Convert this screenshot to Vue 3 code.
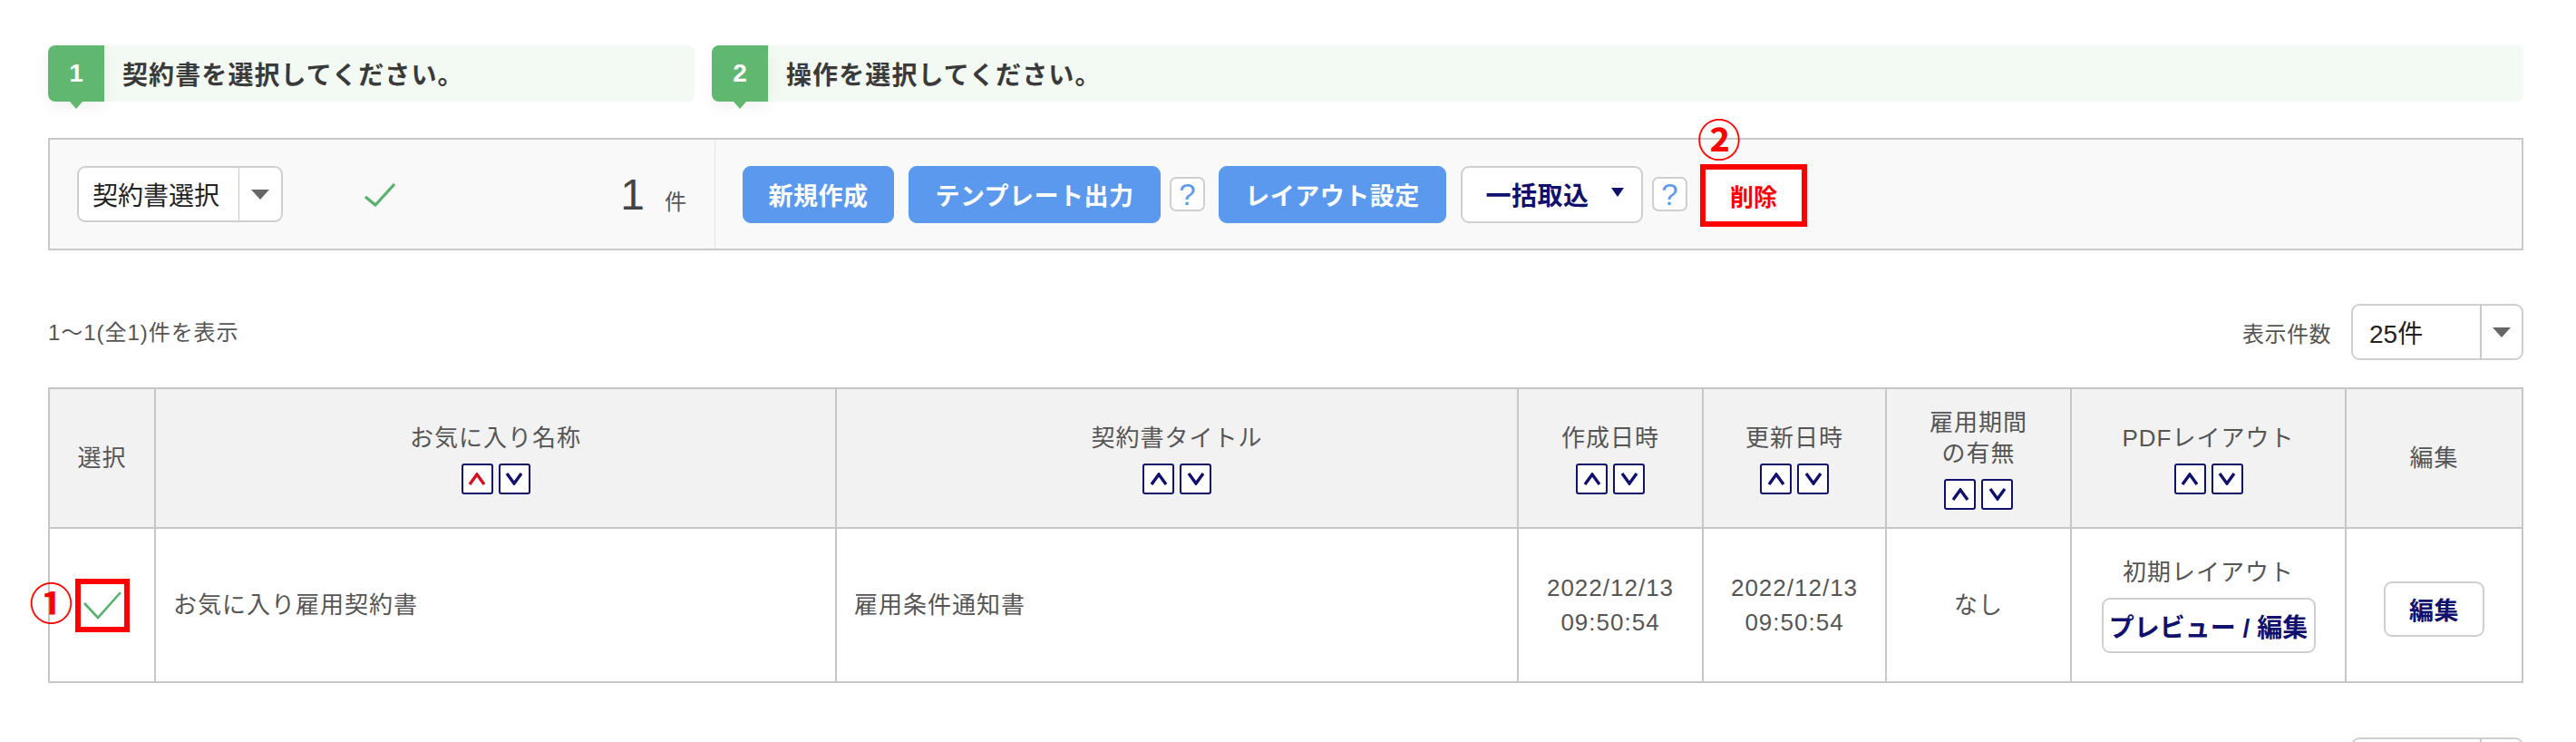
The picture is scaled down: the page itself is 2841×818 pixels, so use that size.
<script setup>
const columns = [
  { key: 'select', label: ['選択'], sort: false, width: 117 },
  { key: 'name', label: ['お気に入り名称'], sort: true, active: true, width: 751 },
  { key: 'title', label: ['契約書タイトル'], sort: true, width: 752 },
  { key: 'created', label: ['作成日時'], sort: true, width: 204 },
  { key: 'updated', label: ['更新日時'], sort: true, width: 202 },
  { key: 'period', label: ['雇用期間', 'の有無'], sort: true, width: 204 },
  { key: 'pdf', label: ['PDFレイアウト'], sort: true, width: 303 },
  { key: 'edit', label: ['編集'], sort: false, width: 195 }
]
</script>

<template>
  <div class="page">
    <div class="steps">
      <div class="step step-one">
        <span class="step-num">1</span>
        <span class="step-text">契約書を選択してください。</span>
      </div>
      <div class="step step-two">
        <span class="step-num">2</span>
        <span class="step-text">操作を選択してください。</span>
      </div>
    </div>

    <div class="toolbar">
      <div class="tool-left">
        <div class="select select-doc">
          <span class="select-label">契約書選択</span>
          <span class="select-arrow"><i class="tri"></i></span>
        </div>
        <svg class="tool-check" width="36" height="27" viewBox="0 0 36 27">
          <polyline points="2,16 13,25 34,2" fill="none" stroke="#56b26b" stroke-width="3.2" />
        </svg>
        <div class="count"><span class="count-num">1</span><span class="count-unit">件</span></div>
      </div>
      <div class="tool-right">
        <button class="btn btn-blue w-new">新規作成</button>
        <button class="btn btn-blue w-tpl">テンプレート出力</button>
        <span class="help">?</span>
        <button class="btn btn-blue w-layout">レイアウト設定</button>
        <button class="btn btn-white w-bulk">一括取込<i class="tri-navy"></i></button>
        <span class="help">?</span>
        <button class="btn-delete">削除<span class="circled circled-two">②</span></button>
      </div>
    </div>

    <div class="info">
      <span class="info-text">1〜1(全1)件を表示</span>
      <div class="per-page">
        <span class="per-label">表示件数</span>
        <div class="select select-page">
          <span class="select-label">25件</span>
          <span class="select-arrow thick"><i class="tri"></i></span>
        </div>
      </div>
    </div>

    <table class="grid">
      <colgroup>
        <col v-for="c in columns" :key="c.key" :style="{ width: c.width + 'px' }" />
      </colgroup>
      <thead>
        <tr>
          <th v-for="c in columns" :key="c.key">
            <div v-for="line in c.label" :key="line">{{ line }}</div>
            <div v-if="c.sort" class="sort">
              <span class="sort-btn">
                <svg width="20" height="14" viewBox="0 0 20 14"><polyline points="2,13 10,2 18,13" fill="none" :stroke="c.active ? '#d3121c' : '#10106e'" stroke-width="3.4" /></svg>
              </span>
              <span class="sort-btn">
                <svg width="20" height="14" viewBox="0 0 20 14"><polyline points="2,1 10,12 18,1" fill="none" stroke="#10106e" stroke-width="3.4" /></svg>
              </span>
            </div>
          </th>
        </tr>
      </thead>
      <tbody>
        <tr>
          <td>
            <span class="mark">
              <span class="circled circled-one">①</span>
              <svg width="44" height="32" viewBox="0 0 44 32">
                <polyline points="2,14 17,30 42,2" fill="none" stroke="#56b26b" stroke-width="2.6" />
              </svg>
            </span>
          </td>
          <td class="left">お気に入り雇用契約書</td>
          <td class="left">雇用条件通知書</td>
          <td class="date">2022/12/13<br />09:50:54</td>
          <td class="date">2022/12/13<br />09:50:54</td>
          <td>なし</td>
          <td>
            <div>初期レイアウト</div>
            <button class="btn btn-white w-preview">プレビュー / 編集</button>
          </td>
          <td><button class="btn btn-white w-edit">編集</button></td>
        </tr>
      </tbody>
    </table>

    <div class="bottom">
      <div class="select select-page">
        <span class="select-label"></span>
        <span class="select-arrow thick"><i class="tri"></i></span>
      </div>
    </div>
  </div>
</template>

<style>
html, body { margin: 0; background: #fff; }
</style>

<style scoped>
.page {
  box-sizing: border-box;
  width: 2841px;
  height: 818px;
  overflow: hidden;
  padding: 50px 58px 0 53px;
  background: #fff;
  font-family: "Liberation Sans", "Noto Sans CJK JP", sans-serif;
  color: #555;
}

.steps { display: flex; gap: 19px; }
.step {
  display: flex;
  align-items: center;
  height: 62px;
  background: #f3f9f3;
  border-radius: 8px;
  position: relative;
}
.step-one { width: 713px; }
.step-two { flex: 1; }
.step-num {
  box-sizing: border-box;
  width: 62px;
  height: 62px;
  display: flex;
  align-items: center;
  justify-content: center;
  background: #60b76f;
  border-radius: 8px 0 0 8px;
  color: #fff;
  font-size: 28px;
  font-weight: 700;
  box-shadow: 0 6px 18px rgba(0, 0, 0, .06);
  position: relative;
}
.step-num::after {
  content: "";
  position: absolute;
  left: 24px;
  top: 62px;
  border-left: 7px solid transparent;
  border-right: 7px solid transparent;
  border-top: 8px solid #60b76f;
}
.step-text {
  margin-left: 20px;
  font-size: 28px;
  letter-spacing: 1.1px;
  font-weight: 700;
  color: #3a3a3a;
}

.toolbar {
  display: flex;
  margin-top: 40px;
  height: 124px;
  box-sizing: border-box;
  border: 2px solid #c9c9c9;
  background: #f9f9f9;
}
.tool-left {
  box-sizing: border-box;
  width: 734px;
  display: flex;
  align-items: center;
  padding: 0 31px 0 30px;
  border-right: 1px solid #e4e4e4;
}
.tool-right {
  display: flex;
  align-items: center;
  padding-left: 30px;
}

.select {
  box-sizing: border-box;
  display: flex;
  height: 62px;
  background: #fff;
  border: 2px solid #cfcfcf;
  border-radius: 9px;
  color: #222;
  font-size: 28px;
}
.select-doc { width: 227px; }
.select-page { width: 190px; }
.select-label { flex: 1; display: flex; align-items: center; padding-left: 15px; }
.select-page .select-label { padding-left: 18px; }
.select-arrow {
  width: 46px;
  display: flex;
  align-items: center;
  justify-content: center;
  border-left: 1px solid #c9c9c9;
}
.select-arrow.thick { border-left-width: 2px; width: 44px; }
.tri {
  border-left: 10px solid transparent;
  border-right: 10px solid transparent;
  border-top: 11px solid #666;
}

.tool-check { margin-left: 89px; }
.count { margin-left: auto; display: flex; align-items: baseline; color: #444; }
.count-num { font-size: 48px; }
.count-unit { font-size: 24px; margin-left: 22px; color: #555; }

.btn {
  box-sizing: border-box;
  height: 63px;
  padding: 0;
  font-family: inherit;
  font-size: 27px;
  letter-spacing: .5px;
  font-weight: 700;
  border-radius: 9px;
  cursor: pointer;
}
.btn-blue { background: #5a99ee; border: 1px solid #5a99ee; color: #fff; }
.btn-white {
  background: #fff;
  border: 2px solid #cfcfcf;
  color: #10106e;
}
.w-new { width: 167px; margin-right: 16px; }
.w-tpl { width: 278px; margin-right: 10px; }
.w-layout { width: 251px; margin: 0 16px 0 15px; }
.w-bulk {
  width: 201px;
  margin-right: 10px;
  padding-left: 6px;
  display: flex;
  align-items: center;
  justify-content: center;
  gap: 24px;
  font-size: 28px;
}
.w-preview { display: block; width: 236px; height: 61px; margin: 11px auto 0; font-size: 28px; letter-spacing: 0; }
.w-edit { width: 111px; height: 61px; margin-top: 8px; }
.tri-navy {
  border-left: 7px solid transparent;
  border-right: 7px solid transparent;
  border-top: 10px solid #10106e;
  margin-top: -4px;
}
.help {
  box-sizing: border-box;
  width: 39px;
  height: 38px;
  display: flex;
  align-items: center;
  justify-content: center;
  background: #fff;
  border: 2px solid #cfcfcf;
  border-radius: 7px;
  color: #5a99ee;
  font-size: 33px;
  line-height: 1;
}
.btn-delete {
  box-sizing: border-box;
  position: relative;
  width: 118px;
  height: 69px;
  margin: 3px 0 0 14px;
  padding: 0;
  background: #fff;
  border: 6px solid #ff0000;
  color: #ff0000;
  font-family: inherit;
  font-size: 26px;
  font-weight: 700;
}
.circled {
  position: absolute;
  color: #ff0000;
  font-size: 48px;
  line-height: 48px;
  font-weight: 700;
}
.circled-two { left: -9px; top: -55px; }
.circled-one { left: -56px; top: -1px; }

.info {
  display: flex;
  justify-content: space-between;
  align-items: center;
  margin-top: 59px;
}
.info-text { font-size: 24px; letter-spacing: .95px; margin-top: -4px; }
.per-page { display: flex; align-items: center; gap: 22px; }
.per-label { font-size: 24px; letter-spacing: .5px; }

.grid {
  width: 2730px;
  margin-top: 30px;
  table-layout: fixed;
  border-collapse: collapse;
  font-size: 26px;
  letter-spacing: 1px;
  line-height: 34px;
  color: #555;
}
.grid th, .grid td {
  border: 2px solid #c6c6c6;
  padding: 0;
  text-align: center;
  vertical-align: middle;
}
.grid th { height: 152px; background: #f2f2f2; font-weight: 400; }
.grid td { height: 168px; background: #fff; }
.grid td.left { text-align: left; padding-left: 19px; }
.grid td.date { line-height: 38px; }
.sort { display: flex; justify-content: center; gap: 6px; margin-top: 11px; }
.sort-btn {
  box-sizing: border-box;
  width: 35px;
  height: 34px;
  display: flex;
  align-items: center;
  justify-content: center;
  background: #fff;
  border: 2px solid #10106e;
  border-radius: 3px;
}

.mark {
  box-sizing: border-box;
  position: relative;
  display: inline-flex;
  align-items: center;
  justify-content: center;
  width: 60px;
  height: 59px;
  vertical-align: middle;
  border: 6px solid #ff0000;
  background: #fff;
}
.mark svg { flex: none; }

.bottom { display: flex; justify-content: flex-end; margin-top: 60px; }
</style>
